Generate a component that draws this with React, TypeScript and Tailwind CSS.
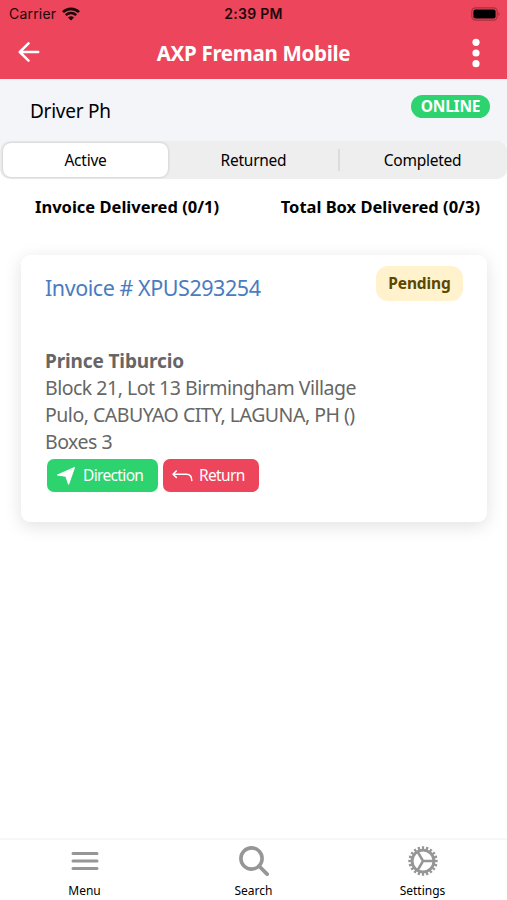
import type { ReactNode } from "react";

interface TabItem {
  label: string;
  icon: ReactNode;
}

function WifiIcon() {
  return (
    <svg width="18" height="14" viewBox="0 0 18 14" fill="none" stroke="#1c0709">
      <path d="M1 5.1a11.4 11.4 0 0 1 16 0" strokeWidth="2.7" />
      <path d="M3.8 8.1a7.4 7.4 0 0 1 10.4 0" strokeWidth="2.4" />
      <path d="M9 13.6 6 10.6a4.3 4.3 0 0 1 6 0z" fill="#1c0709" stroke="none" />
    </svg>
  );
}

function BatteryIcon() {
  return (
    <svg width="30" height="14" viewBox="0 0 30 14" fill="none">
      <rect x="0.8" y="0.8" width="25.4" height="12.4" rx="3.6" stroke="#a8313f" strokeWidth="1.2" />
      <rect x="2.4" y="2.4" width="22.2" height="9.2" rx="2" fill="#000" />
      <path d="M27.5 5v4c1.6-.5 1.6-3.5 0-4z" fill="#a8313f" />
    </svg>
  );
}

function BackIcon() {
  return (
    <svg width="22" height="20" viewBox="0 0 22 20" fill="none" stroke="#fff" strokeWidth="2.5" strokeLinecap="round" strokeLinejoin="round">
      <path d="M10.5 1.4 1.8 10l8.7 8.6M1.8 10h18.4" />
    </svg>
  );
}

function MoreIcon() {
  return (
    <svg width="8" height="30" viewBox="0 0 8 30" fill="#fff">
      <circle cx="4" cy="4.3" r="3.6" />
      <circle cx="4" cy="15" r="3.6" />
      <circle cx="4" cy="25.7" r="3.6" />
    </svg>
  );
}

function DirectionIcon() {
  return (
    <svg width="20" height="20" viewBox="0 0 20 20" fill="#fff" stroke="#fff" strokeLinejoin="round">
      <path d="M18.6 1.4 12.6 18.4 9.8 10.3 1.4 9z" />
    </svg>
  );
}

function ReturnIcon() {
  return (
    <svg width="21" height="12" viewBox="0 0 21 12" fill="none" stroke="#fff" strokeWidth="1.5" strokeLinecap="round" strokeLinejoin="round">
      <path d="M4.3 1 1 4.2l3.3 3.2M1 4.2h13.5c3.5 0 5.3 2.3 5.3 6.3" />
    </svg>
  );
}

function MenuIcon() {
  return (
    <svg width="30" height="30" viewBox="0 0 30 30" stroke="#969696" strokeWidth="3" strokeLinecap="round">
      <path d="M3 7.5h24M3 15h24M3 22.5h24" />
    </svg>
  );
}

function SearchIcon() {
  return (
    <svg width="30" height="30" viewBox="0 0 30 30" fill="none" stroke="#969696" strokeWidth="3.6">
      <circle cx="12.5" cy="12.5" r="10.6" />
      <path d="M20 20l8.1 8.1" strokeWidth="3.8" strokeLinecap="round" />
    </svg>
  );
}

function SettingsIcon() {
  return (
    <svg width="30" height="30" viewBox="0 0 30 30" fill="none" stroke="#969696">
      <circle cx="15" cy="15" r="13.1" strokeWidth="3.2" pathLength="40" strokeDasharray="1.1 0.9" strokeDashoffset="0.55" />
      <circle cx="15" cy="15" r="10.9" strokeWidth="2.9" />
      <path d="M15 15h11M15 15 9.5 5.5M15 15l-5.5 9.5" strokeWidth="2.5" />
    </svg>
  );
}

const tabs: TabItem[] = [
  { label: "Menu", icon: <MenuIcon /> },
  { label: "Search", icon: <SearchIcon /> },
  { label: "Settings", icon: <SettingsIcon /> },
];

function Header() {
  return (
    <header className="h-[79px] bg-[#ed455b]">
      <div className="grid h-[27px] grid-cols-3 items-center pr-[6px] pl-[9px] font-['Inter',sans-serif] text-[#1c0709]">
        <div className="flex items-center gap-[6px] text-[14px] tracking-[0.2px]">
          <span>Carrier</span>
          <WifiIcon />
        </div>
        <span className="pr-[3px] text-center text-[14px] font-semibold tracking-[0.25px]">2:39 PM</span>
        <div className="flex justify-end">
          <BatteryIcon />
        </div>
      </div>
      <div className="flex h-[52px] items-center justify-between pr-[27px] pl-[18px] text-white">
        <button aria-label="Back" className="-mt-[2px]">
          <BackIcon />
        </button>
        <h1 className="pr-[5px] text-[20.5px] font-bold tracking-[-0.3px]">AXP Freman Mobile</h1>
        <button aria-label="More" className="-mt-[1px]">
          <MoreIcon />
        </button>
      </div>
    </header>
  );
}

function InvoiceCard() {
  return (
    <section className="mr-5 ml-[21px] h-[267px] rounded-[9px] bg-white px-[24px] pt-[11px] text-[#666] shadow-[0_4px_18px_rgba(0,0,0,0.12)]">
      <div className="flex items-start justify-between">
        <h2 className="mt-[7px] text-[21.5px] leading-[30px] tracking-[-0.45px] text-[#4a7cc0]">Invoice # XPUS293254</h2>
        <span className="h-[35px] w-[87px] rounded-[12px] bg-[#fff2cd] text-center text-[15.5px] leading-[35px] font-bold tracking-[-0.1px] text-[#5c4800]">
          Pending
        </span>
      </div>
      <div className="mt-[44px] text-[19.5px] leading-[27px] tracking-[-0.5px]">
        <p className="text-[19px] leading-[28px] font-bold tracking-[-0.13px]">Prince Tiburcio</p>
        <p className="-mt-[1px]">Block 21, Lot 13 Birmingham Village</p>
        <p>Pulo, CABUYAO CITY, LAGUNA, PH ()</p>
        <p>Boxes 3</p>
      </div>
      <div className="mt-[4px] ml-[2px] flex gap-[5px] text-[15.5px] tracking-[-0.65px] text-white">
        <button className="flex h-[33px] w-[111px] items-center gap-[7px] rounded-[7px] bg-[#2dd36f] pl-[9px]">
          <DirectionIcon />
          Direction
        </button>
        <button className="flex h-[33px] w-[96px] items-center gap-[6px] rounded-[7px] bg-[#ed455b] pl-[9px]">
          <ReturnIcon />
          Return
        </button>
      </div>
    </section>
  );
}

export default function App() {
  return (
    <div className="flex h-[900px] w-full flex-col overflow-hidden bg-white font-['Noto_Sans',sans-serif] text-black">
      <Header />
      <div className="flex h-[62px] items-start justify-between bg-[#f3f5f9] pr-[17px] pl-[30px]">
        <span className="mt-[17px] text-[19px] leading-[30px] tracking-[-0.25px]">Driver Ph</span>
        <span className="mt-[16px] h-[23px] w-[79px] rounded-full bg-[#2dd36f] text-center text-[15.5px] leading-[23px] font-bold tracking-[-0.2px] text-white">
          ONLINE
        </span>
      </div>
      <div className="bg-linear-to-b from-[#f3f5f9] to-white">
        <div className="grid h-[38px] grid-cols-3 items-center rounded-[10px] bg-[#eee] text-center text-[15.5px] leading-[22px] tracking-[-0.25px]">
          <button className="mr-[1px] ml-[3px] h-[34px] rounded-[8px] bg-white shadow-[0_0_3px_rgba(0,0,0,0.22)]">Active</button>
          <button>Returned</button>
          <button className="h-[22px] border-l-2 border-[#dcdcdc] pr-[2px]">Completed</button>
        </div>
      </div>
      <div className="mt-[14px] flex justify-between pr-[27px] pl-[35px] text-[16.5px] leading-[27px] font-bold">
        <span>Invoice Delivered (0/1)</span>
        <span>Total Box Delivered (0/3)</span>
      </div>
      <main className="flex-1 pt-[35px]">
        <InvoiceCard />
      </main>
      <nav className="grid h-[62px] grid-cols-3 border-t-2 border-[#f7f7f7]">
        {tabs.map((tab) => (
          <button key={tab.label} className="flex flex-col items-center pt-[6px] text-[12px] leading-[16px]">
            {tab.icon}
            <span className="mt-[7px]">{tab.label}</span>
          </button>
        ))}
      </nav>
    </div>
  );
}
